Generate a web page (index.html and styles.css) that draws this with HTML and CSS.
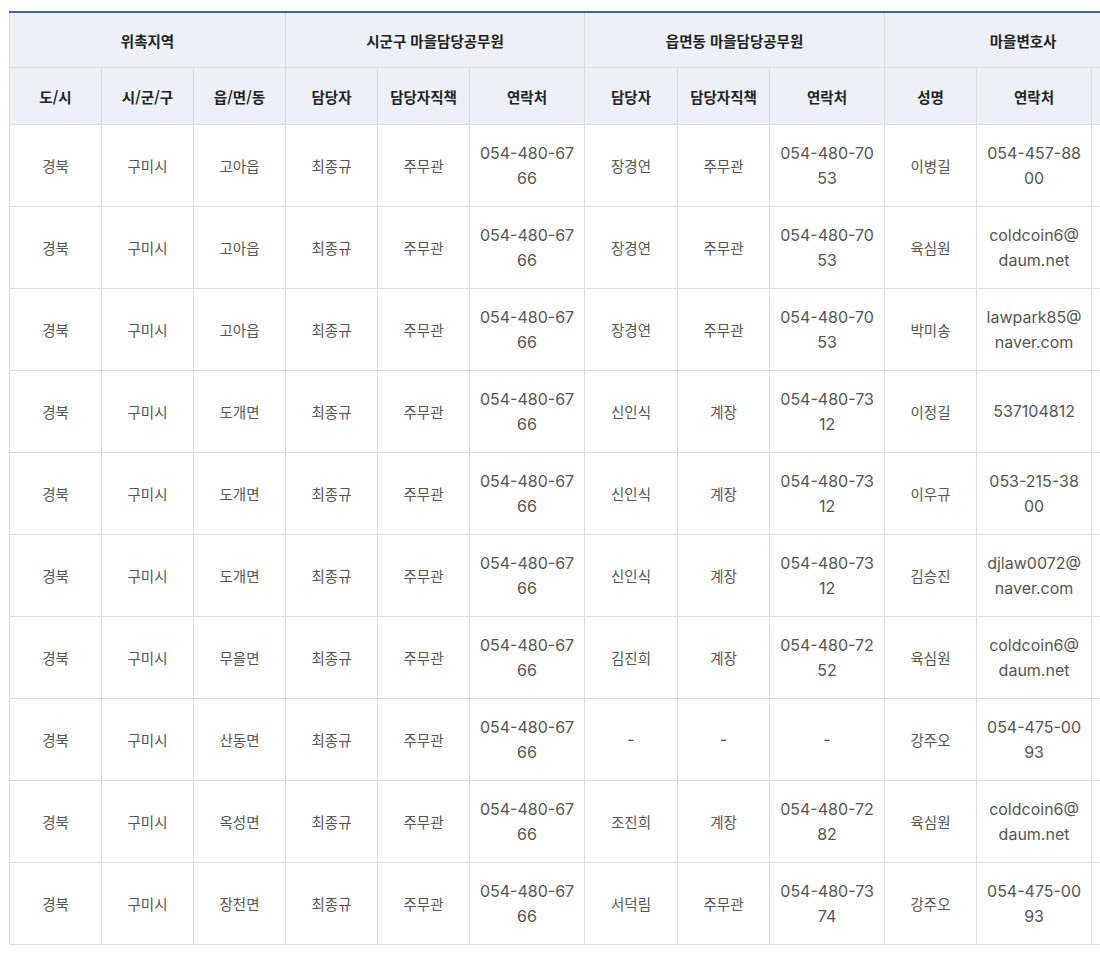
FILE: index.html
```html
<!DOCTYPE html>
<html lang="ko">
<head>
<meta charset="utf-8">
<link rel="stylesheet" href="styles.css">
</head>
<body>
<div class="wrap">
<table class="tbl">
<colgroup>
<col class="c92"><col class="c92"><col class="c92"><col class="c92"><col class="c92"><col class="c115">
<col class="c93"><col class="c92"><col class="c115"><col class="c92"><col class="c115"><col class="c70">
</colgroup>
<thead>
<tr class="h1">
<th colspan="3">위촉지역</th>
<th colspan="3">시군구 마을담당공무원</th>
<th colspan="3">읍면동 마을담당공무원</th>
<th colspan="3">마을변호사</th>
</tr>
<tr class="h2">
<th>도/시</th><th>시/군/구</th><th>읍/면/동</th>
<th>담당자</th><th>담당자직책</th><th>연락처</th>
<th>담당자</th><th>담당자직책</th><th>연락처</th>
<th>성명</th><th>연락처</th><th></th>
</tr>
</thead>
<tbody>
<tr><td>경북</td><td>구미시</td><td>고아읍</td><td>최종규</td><td>주무관</td><td class="num">054-480-6766</td><td>장경연</td><td>주무관</td><td class="num">054-480-7053</td><td>이병길</td><td class="num">054-457-8800</td><td></td></tr>
<tr><td>경북</td><td>구미시</td><td>고아읍</td><td>최종규</td><td>주무관</td><td class="num">054-480-6766</td><td>장경연</td><td>주무관</td><td class="num">054-480-7053</td><td>육심원</td><td class="num mail">coldcoin6@<wbr>daum.net</td><td></td></tr>
<tr><td>경북</td><td>구미시</td><td>고아읍</td><td>최종규</td><td>주무관</td><td class="num">054-480-6766</td><td>장경연</td><td>주무관</td><td class="num">054-480-7053</td><td>박미송</td><td class="num mail">lawpark85@<wbr>naver.com</td><td></td></tr>
<tr><td>경북</td><td>구미시</td><td>도개면</td><td>최종규</td><td>주무관</td><td class="num">054-480-6766</td><td>신인식</td><td>계장</td><td class="num">054-480-7312</td><td>이정길</td><td class="num">537104812</td><td></td></tr>
<tr><td>경북</td><td>구미시</td><td>도개면</td><td>최종규</td><td>주무관</td><td class="num">054-480-6766</td><td>신인식</td><td>계장</td><td class="num">054-480-7312</td><td>이우규</td><td class="num">053-215-3800</td><td></td></tr>
<tr><td>경북</td><td>구미시</td><td>도개면</td><td>최종규</td><td>주무관</td><td class="num">054-480-6766</td><td>신인식</td><td>계장</td><td class="num">054-480-7312</td><td>김승진</td><td class="num mail">djlaw0072@<wbr>naver.com</td><td></td></tr>
<tr><td>경북</td><td>구미시</td><td>무을면</td><td>최종규</td><td>주무관</td><td class="num">054-480-6766</td><td>김진희</td><td>계장</td><td class="num">054-480-7252</td><td>육심원</td><td class="num mail">coldcoin6@<wbr>daum.net</td><td></td></tr>
<tr><td>경북</td><td>구미시</td><td>산동면</td><td>최종규</td><td>주무관</td><td class="num">054-480-6766</td><td class="num">-</td><td class="num">-</td><td class="num">-</td><td>강주오</td><td class="num">054-475-0093</td><td></td></tr>
<tr><td>경북</td><td>구미시</td><td>옥성면</td><td>최종규</td><td>주무관</td><td class="num">054-480-6766</td><td>조진희</td><td>계장</td><td class="num">054-480-7282</td><td>육심원</td><td class="num mail">coldcoin6@<wbr>daum.net</td><td></td></tr>
<tr><td>경북</td><td>구미시</td><td>장천면</td><td>최종규</td><td>주무관</td><td class="num">054-480-6766</td><td>서덕림</td><td>주무관</td><td class="num">054-480-7374</td><td>강주오</td><td class="num">054-475-0093</td><td></td></tr>
</tbody>
</table>
</div>
</body>
</html>
```
FILE: styles.css
```css
html, body {
  margin: 0;
  padding: 0;
  background: #fff;
  overflow: hidden;
}
.wrap {
  padding: 11px 0 0 9px;
  width: 1300px;
}
.tbl {
  border-collapse: collapse;
  table-layout: fixed;
  width: 1152px;
  border-top: 2px solid #3a62a6;
  font-family: "Noto Sans CJK KR", "Noto Sans", sans-serif;
  font-size: 14.5px;
  line-height: 25px;
}
.c92 { width: 92px; }
.c93 { width: 93px; }
.c115 { width: 115px; }
.c70 { width: 70px; }
.tbl th, .tbl td {
  border: 1px solid #dcdcdc;
  text-align: center;
  vertical-align: middle;
}
.tbl th {
  padding: 0 2px;
  background: #edf0f5;
  color: #222;
  font-weight: 700;
}
.tbl tr.h1 th { height: 54px; }
.tbl tr.h2 th { height: 56px; }
.tbl td {
  padding: 0 8px;
  color: #555;
  height: 81px;
  font-weight: 400;
  word-break: break-all;
}
.tbl td.num {
  font-family: Inter, "Noto Sans CJK KR", sans-serif;
  font-size: 16px;
}
.tbl td.mail {
  word-break: normal;
  overflow-wrap: anywhere;
}
```
